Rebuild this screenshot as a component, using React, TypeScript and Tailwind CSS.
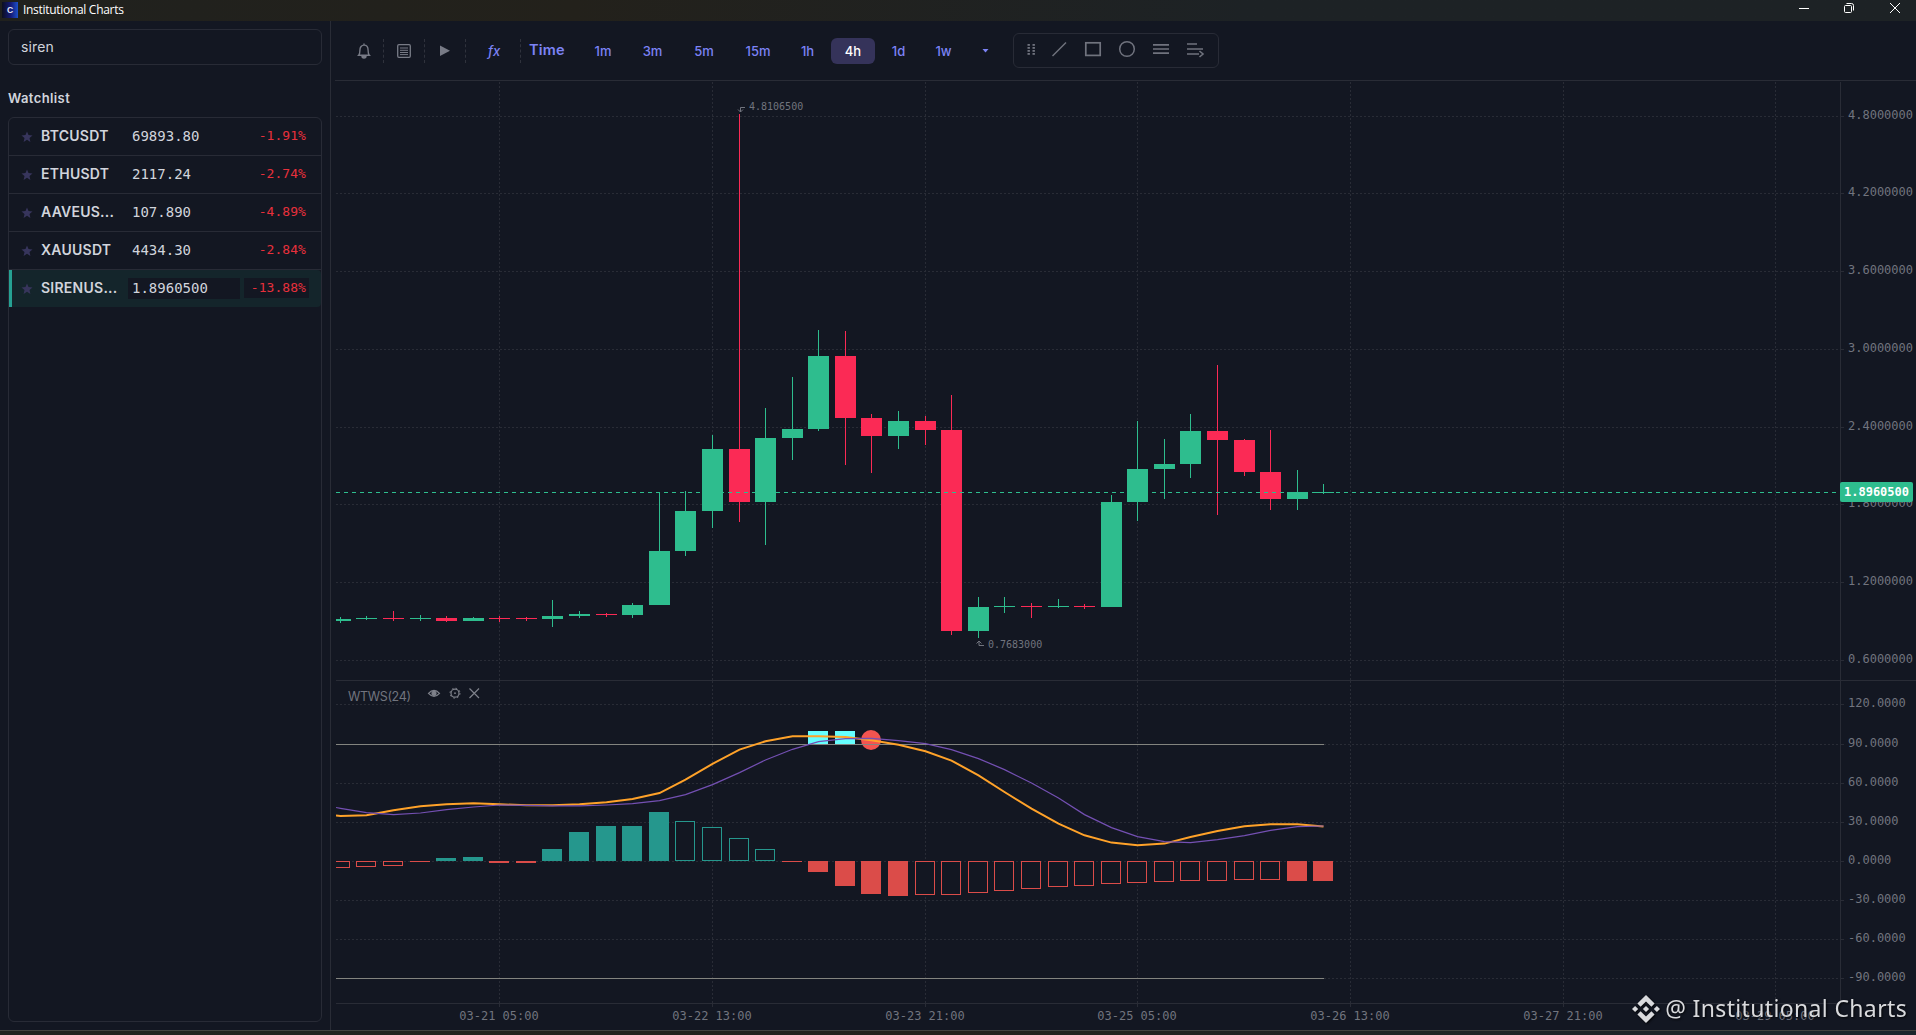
import clsx from "clsx";

const MONO = "font-['DejaVu_Sans_Mono','Liberation_Mono',monospace]";

const UP = "#2ebd8e";
const DOWN = "#fb2a55";
const HIST_UP = "#25978d";
const HIST_DOWN = "#db4c49";
const GRID = "#292c36";
const MUTED = "#71747e";

type Candle = [high: number, top: number, bottom: number, low: number, up: 0 | 1];

const candles: Candle[] = [
  [617, 619, 621, 623, 1],
  [616, 618, 619, 620, 1],
  [611, 618, 619, 621, 0],
  [615, 618, 619, 621, 1],
  [616, 618, 621, 622, 0],
  [617, 618, 621, 621, 1],
  [616, 618, 619, 622, 0],
  [617, 618, 619, 621, 0],
  [600, 616, 619, 627, 1],
  [611, 614, 616, 618, 1],
  [613, 614, 615, 617, 0],
  [603, 605, 615, 618, 1],
  [493, 551, 605, 605, 1],
  [491, 511, 551, 556, 1],
  [435, 449, 511, 528, 1],
  [114, 449, 502, 522, 0],
  [408, 438, 502, 545, 1],
  [377, 429, 438, 460, 1],
  [330, 356, 429, 431, 1],
  [331, 356, 418, 465, 0],
  [414, 418, 436, 473, 0],
  [411, 421, 436, 449, 1],
  [416, 421, 430, 445, 0],
  [395, 430, 631, 635, 0],
  [597, 607, 631, 638, 1],
  [597, 606, 607, 613, 1],
  [603, 606, 607, 618, 0],
  [599, 606, 607, 608, 1],
  [604, 606, 607, 609, 0],
  [495, 502, 607, 607, 1],
  [421, 469, 502, 521, 1],
  [439, 464, 469, 499, 1],
  [414, 431, 464, 478, 1],
  [365, 431, 440, 515, 0],
  [439, 440, 472, 476, 0],
  [430, 472, 499, 510, 0],
  [470, 492, 499, 510, 1],
  [484, 492, 493, 494, 1],
];

// end of each histogram bar, measured from the zero line, and whether it is filled
const ZERO = 861;
const histogram: [end: number, filled: 0 | 1][] = [
  [868, 0], [867, 0], [866, 0], [862, 1], [858, 1], [857, 1], [863, 1], [863, 1],
  [849, 1], [832, 1], [826, 1], [826, 1], [812, 1], [821, 0], [827, 0], [838, 0],
  [849, 0], [862, 1], [872, 1], [886, 1], [894, 1], [896, 1], [895, 0], [895, 0],
  [893, 0], [891, 0], [889, 0], [887, 0], [886, 0], [884, 0], [883, 0], [882, 0],
  [881, 0], [881, 0], [880, 0], [880, 0], [881, 1], [881, 1],
];

const fast = [
  815.7, 815, 810, 806, 804, 803, 804, 805, 805, 804, 802, 798.8, 792.8, 779.3, 763.5,
  749.3, 741, 736, 736, 736.7, 740, 744.5, 751, 760.3, 775, 791.7, 808.3, 823.3, 835,
  842.3, 845, 843.3, 836.7, 830.7, 826, 824, 824, 826.3,
];

const slow = [
  808, 812.3, 814.3, 812.7, 809.3, 806.7, 804.7, 805, 805.6, 805.6, 804.7, 803.3, 800.3,
  794.3, 784.3, 772.3, 759.7, 749, 741.3, 738.3, 738, 740.3, 743.3, 749.3, 758.3, 769.3,
  782.7, 797.7, 814.3, 827.3, 836.3, 841.3, 842.3, 839.3, 835.3, 830, 826.3, 825.7,
];

const priceTicks: [number, string][] = [
  [116, "4.8000000"],
  [193, "4.2000000"],
  [271, "3.6000000"],
  [349, "3.0000000"],
  [427, "2.4000000"],
  [504, "1.8000000"],
  [582, "1.2000000"],
  [660, "0.6000000"],
];

const oscTicks: [number, string][] = [
  [704, "120.0000"],
  [744, "90.0000"],
  [783, "60.0000"],
  [822, "30.0000"],
  [861, "0.0000"],
  [900, "-30.0000"],
  [939, "-60.0000"],
  [978, "-90.0000"],
];

const timeTicks: [number, string][] = [
  [499, "03-21 05:00"],
  [712, "03-22 13:00"],
  [925, "03-23 21:00"],
  [1137, "03-25 05:00"],
  [1350, "03-26 13:00"],
  [1563, "03-27 21:00"],
  [1775, "03-29 05:00"],
];

const barX = (i: number) => Math.round(339.75 + 26.585 * i);

const toPoints = (start: number, ys: number[]) =>
  [`336,${start}`, ...ys.map((y, i) => `${barX(i) + 0.5},${y + 0.3}`)].join(" ");

const watchlist = [
  { symbol: "BTCUSDT", price: "69893.80", change: "-1.91%" },
  { symbol: "ETHUSDT", price: "2117.24", change: "-2.74%" },
  { symbol: "AAVEUS...", price: "107.890", change: "-4.89%" },
  { symbol: "XAUUSDT", price: "4434.30", change: "-2.84%" },
  { symbol: "SIRENUS...", price: "1.8960500", change: "-13.88%", active: true },
];

const intervals = [
  { label: "1m", width: "w-11" },
  { label: "3m", width: "w-[47px]" },
  { label: "5m", width: "w-12" },
  { label: "15m", width: "w-13" },
  { label: "1h", width: "w-[39px]" },
  { label: "4h", width: "w-11", active: true },
  { label: "1d", width: "w-[39px]" },
  { label: "1w", width: "w-[43px]" },
];

function TitleBar() {
  return (
    <header className="flex h-[21px] shrink-0 items-start justify-between bg-linear-to-r from-[#20211e] via-[#23211b] via-30% to-[#1d2225] to-65% pr-4 pl-0.5">
      <div className="flex items-center gap-[5px] pt-px">
        <svg width="16" height="16" viewBox="0 0 16 16">
          <defs>
            <linearGradient id="app">
              <stop offset="0" stopColor="#0c0f20" />
              <stop offset="0.55" stopColor="#141a78" />
              <stop offset="1" stopColor="#1d50c8" />
            </linearGradient>
          </defs>
          <rect width="16" height="16" fill="url(#app)" />
          <text
            className="font-['Liberation_Sans',sans-serif]"
            x="8"
            y="11"
            fontSize="8.500"
            fontWeight="bold"
            textAnchor="middle"
            fill="#e8eaf5"
          >
            C
          </text>
        </svg>
        <span className="font-['Open_Sans',sans-serif] text-xs leading-[17px] tracking-[-0.3px] text-white">
          Institutional Charts
        </span>
      </div>
      <div className="flex gap-9 pt-[3px]">
        <svg className="-mr-px" width="10" height="11" viewBox="0 0 10 11" stroke="#fff" fill="none">
          <path d="M0 5.500h10" />
        </svg>
        <svg width="10" height="11" viewBox="0 0 10 11" stroke="#fff" fill="none">
          <rect x="0.500" y="2.500" width="7" height="7" rx="1" />
          <path d="M2.500 0.500H7.500a2 2 0 0 1 2 2V7.500" />
        </svg>
        <svg width="10" height="11" viewBox="0 0 10 11" stroke="#fff" fill="none">
          <path d="M0 0l10 10M10 0L0 10" />
        </svg>
      </div>
    </header>
  );
}

function Sidebar() {
  return (
    <aside className="flex w-[331px] shrink-0 flex-col border-r border-[#292c36] px-2 pt-2 pb-2">
      <div className="flex h-9 w-[314px] items-center rounded-md border border-[#282b36] px-3 text-sm tracking-[0.15px] text-[#d1d4dc]">
        siren
      </div>
      <h2 className="mt-[23px] h-[29px] text-[13px] leading-[21px] font-semibold tracking-[0.4px] text-[#d1d4dc]">
        Watchlist
      </h2>
      <ul className="w-[314px] flex-1 overflow-hidden rounded-md border border-[#282b36]">
        {watchlist.map((row) => (
          <li
            key={row.symbol}
            className={clsx(
              "flex items-center pr-3",
              row.active
                ? "h-[37px] rounded-r border-l-3 border-[#26a193] bg-[#14252b] pl-2"
                : "h-[38px] border-b border-[#282b36] pl-[11px]",
            )}
          >
            <svg width="14" height="14" viewBox="0 0 14 14" fill="#37355c">
              <path d="M7 1.500l1.500 3.600 4 .3-3 2.600.9 3.900L7 9.800l-3.400 2.100.9-3.900-3-2.600 4-.3z" />
            </svg>
            <span className="mb-0.5 ml-[7px] w-[87px] text-sm font-semibold tracking-[0.25px] text-[#d1d4dc]">
              {row.symbol}
            </span>
            <span
              className={clsx(
                "w-28 pl-1 text-sm leading-[21px] text-[#d1d4dc]",
                MONO,
                row.active && "bg-[#131722]",
              )}
            >
              {row.price}
            </span>
            <span
              className={clsx(
                "mb-0.5 ml-1 w-[65px] pr-[3px] text-right text-[13px] leading-5 tracking-[0.05px] text-[#e8303c]",
                MONO,
                row.active && "bg-[#131722]",
              )}
            >
              {row.change}
            </span>
          </li>
        ))}
      </ul>
    </aside>
  );
}

function Divider() {
  return <div className="h-6 border-l border-dashed border-[#2f323c]" />;
}

function Toolbar() {
  return (
    <div className="flex h-[60px] shrink-0 items-center border-b border-[#292c36] pl-[19px] text-[#787b86]">
      <div className="flex h-6 items-center">
        <svg width="20" height="20" viewBox="0 0 20 20" fill="none" stroke="currentColor" strokeWidth="1.400">
          <path d="M10 2.600v1.200M4.700 14.200c1-1 1.200-1.800 1.200-5 0-3 1.700-5.100 4.100-5.100s4.100 2.100 4.100 5.100c0 3.200.2 4 1.200 5z" />
          <path d="M8 15h4a2 2 0 0 1-4 0z" fill="currentColor" />
        </svg>
        <div className="w-[9px]" />
        <Divider />
        <svg className="ml-[10px]" width="20" height="20" viewBox="0 0 20 20" fill="none" stroke="currentColor" strokeWidth="1.300">
          <rect x="3.700" y="3.700" width="12.600" height="12.600" rx="1.200" />
          <path d="M6 7h8M6 9.300h8M6 11.500h8M6 13.600h8" strokeWidth="1" />
        </svg>
        <div className="w-[10px]" />
        <Divider />
        <svg className="ml-[15px]" width="10" height="12" viewBox="0 0 10 12" fill="currentColor">
          <path d="M0 0.500L10 5.800 0 11z" />
        </svg>
        <div className="w-[15px]" />
        <Divider />
        <span className="mt-0.5 ml-[22px] w-8 text-[13px] font-medium text-[#7c83f6] italic">fx</span>
        <Divider />
      </div>
      <span className="mb-0.5 ml-2 w-[52px] text-[14.5px] leading-5 font-semibold tracking-[0.2px] text-[#7c83f6]">
        Time
      </span>
      <div className="flex gap-1">
        {intervals.map((item) => (
          <button
            key={item.label}
            className={clsx(
              "h-[26px] rounded-md pt-0.5 text-[13px] font-medium",
              item.width,
              item.active ? "bg-[#35335a] text-white" : "text-[#7c83f6]",
            )}
          >
            {item.label}
          </button>
        ))}
      </div>
      <svg className="ml-[17px]" width="7" height="4" viewBox="0 0 7 4" fill="#7c83f6">
        <path d="M0.500 0h6L3.500 3.600z" />
      </svg>
      <div className="mb-px ml-6 flex h-[35px] w-[206px] items-center rounded-md border border-[#282b36] pb-0.5 text-[#70737e]">
        <svg className="ml-[13px]" width="9" height="12" viewBox="0 0 9 12" fill="currentColor">
          {[1, 4, 7, 10].map((y) => (
            <g key={y}>
              <rect x="0.500" y={y} width="2.400" height="1.800" />
              <rect x="5.500" y={y} width="2.400" height="1.800" />
            </g>
          ))}
        </svg>
        <div className="ml-[13px] flex gap-3.5">
          <svg width="20" height="20" viewBox="0 0 20 20" fill="none" stroke="currentColor" strokeWidth="1.500">
            <path d="M3.500 17L17 3.500" />
          </svg>
          <svg width="20" height="20" viewBox="0 0 20 20" fill="none" stroke="currentColor" strokeWidth="1.700">
            <rect x="2.800" y="3.800" width="14.400" height="12.600" />
          </svg>
          <svg width="20" height="20" viewBox="0 0 20 20" fill="none" stroke="currentColor" strokeWidth="1.500">
            <circle cx="10" cy="10" r="7.300" />
          </svg>
          <svg width="20" height="20" viewBox="0 0 20 20" fill="none" stroke="currentColor" strokeWidth="1.700">
            <path d="M2 5.800h16M2 10h16M2 14.200h16" />
          </svg>
          <svg width="20" height="20" viewBox="0 0 20 20" fill="none" stroke="currentColor" strokeWidth="1.600">
            <path d="M2 5h10M2 10h16M2 15h12M14.500 12l3.500 3-3.500 3" />
          </svg>
        </div>
      </div>
    </div>
  );
}

function Grid() {
  return (
    <g stroke={GRID}>
      {[...priceTicks, ...oscTicks].map(([y]) => (
        <g key={y}>
          <path d={`M336 ${y + 0.5}H1840`} strokeDasharray="2 2" />
          <path d={`M1841 ${y + 0.5}h3`} />
        </g>
      ))}
      {timeTicks.map(([x]) => (
        <g key={x}>
          <path d={`M${x + 0.5} 82V680M${x + 0.5} 681V1003`} strokeDasharray="2 2" />
          <path d={`M${x + 0.5} 1003v4`} />
        </g>
      ))}
      <path d="M336 680.500H1916M336 1003.500H1841M1840.500 82V1004" />
    </g>
  );
}

function PriceChart() {
  return (
    <svg className={clsx("block shrink-0", MONO)} width="1581" height="949" viewBox="335 81 1581 949">
      <defs>
        <clipPath id="plot">
          <rect x="336" y="81" width="1504" height="949" />
        </clipPath>
      </defs>
      <Grid />

      <g fill={MUTED} fontSize="12">
        {[...priceTicks, ...oscTicks].map(([y, label]) => (
          <text key={y} x="1848" y={y + 3}>
            {label}
          </text>
        ))}
        {timeTicks.map(([x, label]) => (
          <text key={x} x={x} y="1020" textAnchor="middle">
            {label}
          </text>
        ))}
      </g>

      <g clipPath="url(#plot)">
        {candles.map(([high, top, bottom, low, up], i) => (
          <g key={i} fill={up ? UP : DOWN}>
            <rect x={barX(i)} y={high} width="1" height={low - high} />
            <rect x={barX(i) - 10} y={top} width="21" height={bottom - top} />
          </g>
        ))}

        {/* overbought markers */}
        <rect x="808" y="731" width="20" height="13" fill="#66ffff" />
        <rect x="835" y="731" width="20" height="13" fill="#66ffff" />
        <circle cx="871" cy="740" r="10" fill="#f25450" />

        {histogram.map(([end, filled], i) => {
          const x = barX(i) - 10;
          const top = Math.min(end, ZERO);
          const height = Math.abs(end - ZERO);
          const color = end < ZERO ? HIST_UP : HIST_DOWN;
          return filled ? (
            <rect key={i} x={x} y={top} width="20" height={height} fill={color} />
          ) : (
            <rect key={i} x={x + 0.5} y={top + 0.5} width="19" height={height - 1} fill="#131722" stroke={color} />
          );
        })}

        <path d="M336 744.500H1324M336 978.500H1324" stroke="#83847f" />
        <polyline points={toPoints(815.5, fast)} fill="none" stroke="#ffa229" strokeWidth="2" />
        <polyline points={toPoints(807.5, slow)} fill="none" stroke="#7450b3" strokeWidth="1.200" />
      </g>

      {/* highest and lowest price */}
      <g fill="none" stroke={MUTED}>
        <path d="M745 107.500h-4.500V112M738 109.500l2.500 2.500 2.500-2.500" />
        <path d="M984 645.500h-5V641M976.500 643.500l2.500-2.500 2.500 2.500" />
      </g>
      <g fill={MUTED} fontSize="10">
        <text x="749" y="110">4.8106500</text>
        <text x="988" y="648">0.7683000</text>
      </g>

      {/* last price */}
      <path d="M336 492.500H1840" stroke={UP} strokeDasharray="4 4" />
      <rect x="1840" y="482" width="73" height="20" rx="2" fill={UP} />
      <text x="1844" y="495.500" fontSize="12" fontWeight="bold" fill="#fff" textLength="65">
        1.8960500
      </text>

      {/* indicator header */}
      <text
        className="font-[Inter,sans-serif]"
        x="348"
        y="701"
        fontSize="12.500"
        fill={MUTED}
        textLength="63"
      >
        WTWS(24)
      </text>
      <g fill="none" stroke="#7f828b" strokeWidth="1.200">
        <path d="M428.500 693.300q5.500-6 11 0q-5.500 6-11 0z" />
        <circle cx="434" cy="693.300" r="2" fill="#7f828b" />
        <circle cx="455" cy="693.200" r="4" />
        <circle cx="455" cy="693.200" r="5" strokeWidth="1" strokeDasharray="1.600 2.330" />
        <circle cx="455" cy="693.200" r="0.900" fill="#7f828b" stroke="none" />
        <path d="M469.500 688.500l9.500 9.500M479 688.500l-9.500 9.500" />
      </g>
    </svg>
  );
}

function Watermark() {
  return (
    <div className="absolute right-[9px] bottom-[9px] flex items-center gap-[5px] text-[#d9dadd] drop-shadow-[1px_1px_1px_rgba(0,0,0,0.8)]">
      <svg className="mt-px" width="28" height="28" viewBox="0 0 28 28" fill="currentColor">
        <path d="M14 0l8.600 8.600-3.200 3.200L14 6.400l-5.400 5.400-3.200-3.200zM14 28l8.600-8.600-3.200-3.200-5.400 5.400-5.400-5.400-3.200 3.200z" />
        <path d="M14 10.900l3.100 3.100-3.100 3.100-3.100-3.100zM3.100 10.900L6.200 14l-3.100 3.100L0 14zM24.900 10.900L28 14l-3.100 3.100-3.100-3.100z" />
      </svg>
      <span className="font-['Noto_Sans',sans-serif] text-[23px] leading-9 tracking-[0.35px] whitespace-nowrap">
        @ Institutional Charts
      </span>
    </div>
  );
}

export default function App() {
  return (
    <div className="relative flex h-[1035px] w-[1916px] flex-col overflow-hidden bg-[#131722] font-[Inter,sans-serif]">
      <TitleBar />
      <div className="flex h-[1009px] shrink-0">
        <Sidebar />
        <main className="flex flex-1 flex-col pl-1">
          <Toolbar />
          <PriceChart />
        </main>
      </div>
      <footer className="h-[5px] border-t border-[#42433f] bg-linear-to-r from-[#20231f] via-[#23221c] to-[#1b262c]" />
      <Watermark />
    </div>
  );
}
